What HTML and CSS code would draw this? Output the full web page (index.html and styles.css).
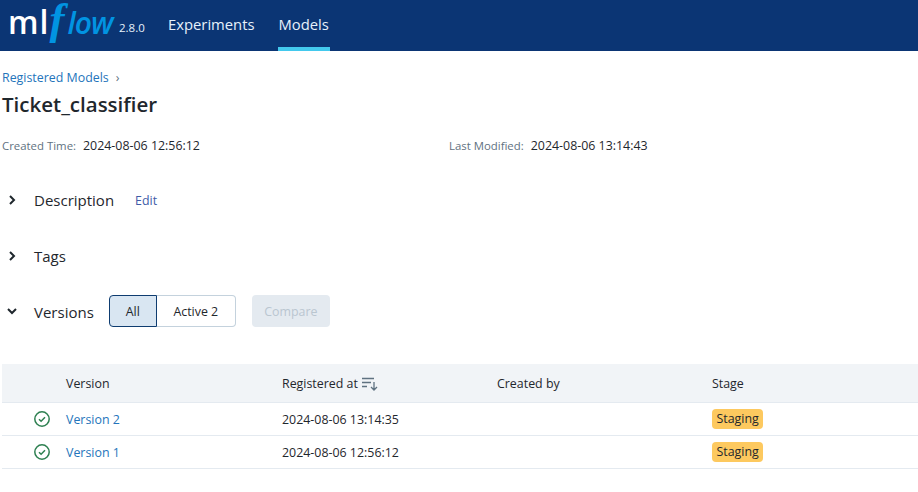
FILE: index.html
```html
<!DOCTYPE html>
<html lang="en">
<head>
<meta charset="utf-8">
<title>Ticket_classifier - MLflow Model</title>
<link rel="stylesheet" href="styles.css">
</head>
<body>
<header class="topbar">
  <a class="logo" href="#"><span class="logo-ml">ml</span><span class="logo-f">f</span><span class="logo-low">low</span></a>
  <span class="version">2.8.0</span>
  <nav class="nav">
    <a class="nav-link" href="#">Experiments</a>
    <a class="nav-link active" href="#">Models</a>
  </nav>
</header>
<main class="page">
  <div class="breadcrumb"><a href="#">Registered Models</a><span class="crumb-sep">›</span></div>
  <h1 class="title">Ticket_classifier</h1>
  <div class="meta">
    <div class="meta-item"><span class="meta-label">Created Time:</span><span class="meta-value">2024-08-06 12:56:12</span></div>
    <div class="meta-item"><span class="meta-label">Last Modified:</span><span class="meta-value">2024-08-06 13:14:43</span></div>
  </div>
  <section class="section">
    <svg class="chev" viewBox="0 0 12 12"><path d="M4 2l4 4-4 4"/></svg>
    <span class="section-title">Description</span>
    <a class="edit" href="#">Edit</a>
  </section>
  <section class="section">
    <svg class="chev" viewBox="0 0 12 12"><path d="M4 2l4 4-4 4"/></svg>
    <span class="section-title">Tags</span>
  </section>
  <section class="section versions">
    <svg class="chev" viewBox="0 0 12 12"><path d="M2 4l4 4 4-4"/></svg>
    <span class="section-title">Versions</span>
    <div class="segmented">
      <button class="seg seg-on">All</button>
      <button class="seg seg-off">Active 2</button>
    </div>
    <button class="compare" disabled>Compare</button>
  </section>
  <div class="table">
    <div class="row head">
      <div class="cell c-status"></div>
      <div class="cell c-version">Version</div>
      <div class="cell c-reg">Registered at
        <svg class="sort" viewBox="0 0 16 14"><path d="M0 1.500h12M0 5.500h9M0 9.500h5M12 5v8M9 10l3 3 3-3"/></svg>
      </div>
      <div class="cell c-by">Created by</div>
      <div class="cell c-stage">Stage</div>
    </div>
    <div class="row">
      <div class="cell c-status"><svg class="ok" viewBox="0 0 16 16"><circle cx="8" cy="8" r="7.200"/><path d="M5 8.200l2.100 2.100L11 6.300"/></svg></div>
      <div class="cell c-version"><a href="#">Version 2</a></div>
      <div class="cell c-reg">2024-08-06 13:14:35</div>
      <div class="cell c-by"></div>
      <div class="cell c-stage"><span class="tag">Staging</span></div>
    </div>
    <div class="row">
      <div class="cell c-status"><svg class="ok" viewBox="0 0 16 16"><circle cx="8" cy="8" r="7.200"/><path d="M5 8.200l2.100 2.100L11 6.300"/></svg></div>
      <div class="cell c-version"><a href="#">Version 1</a></div>
      <div class="cell c-reg">2024-08-06 12:56:12</div>
      <div class="cell c-by"></div>
      <div class="cell c-stage"><span class="tag">Staging</span></div>
    </div>
  </div>
</main>
</body>
</html>
```
FILE: styles.css
```css
* { box-sizing: border-box; }
html, body { margin: 0; padding: 0; background: #fff; }
body { font-family: "Open Sans", "Noto Sans", sans-serif; font-size: 12.4px; color: #1f272d; overflow: hidden; height: 492px; }
a { text-decoration: none; color: #2374bb; }

.topbar { height: 51px; background: #0b3574; display: flex; align-items: stretch; }
.logo { display: block; width: 111px; margin-left: 8px; height: 51px; line-height: 38px; white-space: nowrap; }
.logo-ml { font-family: "Open Sans", sans-serif; font-weight: 600; font-size: 32px; letter-spacing: 1px; color: #fff; }
.logo-f { font-family: "Liberation Serif", serif; font-style: italic; font-weight: 700; font-size: 45px; color: #0194e2; }
.logo-low { font-family: "Open Sans", sans-serif; font-style: italic; font-weight: 600; font-size: 30px; letter-spacing: -1px; color: #0194e2; margin-left: 3px; }
.version { color: #e7f1fb; font-size: 11.5px; width: 49px; padding-top: 20px; }
.nav { display: flex; gap: 23px; }
.nav-link { color: #e7f1fb; font-size: 14.800px; height: 51px; line-height: 49px; }
.nav-link.active { border-bottom: 4px solid #43c9ed; padding: 0 1px; }

.page { padding: 18px 0 0 2px; }
.breadcrumb { font-size: 12.4px; line-height: 18px; color: #5f7281; }
.crumb-sep { margin-left: 7px; }
.title { font-size: 20.5px; font-weight: 600; line-height: 28px; margin: 3px 0 0; color: #1f272d; }
.meta { display: flex; margin-top: 18px; line-height: 20px; }
.meta-item { width: 447px; }
.meta-label { font-size: 11.400px; color: #5f7281; margin-right: 7px; }
.meta-value { font-size: 12.4px; color: #1f272d; }

.section { display: flex; align-items: center; height: 24px; margin-top: 32px; }
.chev { width: 12px; height: 12px; margin-left: 4px; margin-right: 16px; fill: none; stroke: #1f272d; stroke-width: 2; }
.section-title { font-size: 15px; color: #1f272d; }
.edit { font-size: 12.4px; margin-left: 21px; color: #3f5ca8; }
.versions { height: 32px; margin-top: 27px; }
.versions .section-title { margin-top: 2px; }
.segmented { display: flex; margin-left: 15px; height: 32px; }
.seg { font: inherit; padding: 0; height: 32px; color: #1f272d; }
.seg-on { width: 48px; background: #d9e6f2; border: 1px solid #0e3c70; border-radius: 4px 0 0 4px; }
.seg-off { width: 79px; background: #fff; border: 1px solid #c4d2dd; border-left: 0; border-radius: 0 4px 4px 0; }
.compare { font: inherit; width: 78px; height: 32px; margin-left: 16px; background: #e4eaf0; border: 0; border-radius: 4px; color: #bac6d0; }

.table { margin-top: 37px; }
.row { display: flex; align-items: center; height: 33px; border-bottom: 1px solid #e4eaf0; }
.head { height: 39px; background: #f1f4f7; padding-top: 1px; }
.cell { flex: none; }
.c-status { width: 64px; padding-left: 32px; display: flex; }
.c-version { width: 216px; }
.c-reg { width: 215px; display: flex; align-items: center; gap: 4px; }
.c-by { width: 215px; }
.sort { width: 16px; height: 14px; fill: none; stroke: #5f7281; stroke-width: 1.300; }
.ok { width: 16px; height: 16px; fill: none; stroke: #2e8051; stroke-width: 1.500; }
.tag { display: inline-block; background: #fdc95f; border-radius: 4px; padding: 0 4.500px; height: 20px; line-height: 20px; }
```
